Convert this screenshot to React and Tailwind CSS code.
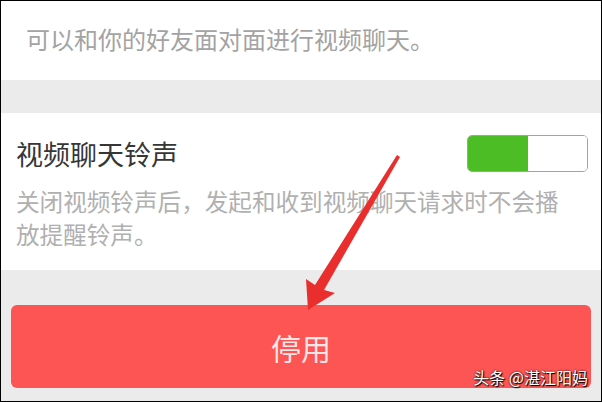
import React from 'react';

const Toggle = () => (
  <div className="flex w-[121px] h-[37px] rounded-[5px] border-[1.5px] border-[#7fbf63] overflow-hidden shrink-0">
    <div className="w-[60px] h-full bg-[#4cbd25]" />
    <div className="flex-1 h-full bg-white" />
  </div>
);

const Arrow = () => (
  <svg className="absolute left-0 top-0 pointer-events-none" width="602" height="402" viewBox="0 0 602 402">
    <polygon
      points="396,154 399,156 323,289 334,292 307,309 305,278 314,284"
      fill="#ea2e2e"
    />
  </svg>
);

const App = () => {
  return (
    <div
      className="relative w-[602px] h-[402px] border border-black bg-[#ebebeb] flex flex-col overflow-hidden"
      style={{ fontFamily: '"Noto Sans CJK SC", "Noto Sans", sans-serif' }}
    >
      {/* top description */}
      <div className="h-[79px] bg-white pl-[25px] pt-[22px]">
        <p className="text-[24px] leading-[32px] text-[#a3a3a3]">可以和你的好友面对面进行视频聊天。</p>
      </div>

      {/* gap band */}
      <div className="h-[33px]" />

      {/* ringtone setting */}
      <div className="h-[157px] bg-white px-[15px] pt-[22px]">
        <div className="flex items-center justify-between">
          <span className="text-[27px] leading-[36px] text-[#363636]">视频聊天铃声</span>
          <div className="mr-[-2px]">
            <Toggle />
          </div>
        </div>
        <p className="mt-[13px] text-[23.6px] leading-[33px] text-[#b0b0b0]">
          关闭视频铃声后，发起和收到视频聊天请求时不会播
          <br />
          放提醒铃声。
        </p>
      </div>

      {/* button area */}
      <div className="flex-1 px-[10px] pt-[35px]">
        <button className="relative w-full h-[83px] rounded-[6px] bg-[#fd5454] flex items-center justify-center">
          <span className="text-[30px] leading-none text-[#fde6e6]">停用</span>
          <span className="absolute right-[3px] bottom-[3px] text-[16px] leading-none text-white [text-shadow:0_0_2px_#000,1px_1px_1px_#000]">
            头条 @湛江阳妈
          </span>
        </button>
      </div>

      <Arrow />
    </div>
  );
};

export default App;
